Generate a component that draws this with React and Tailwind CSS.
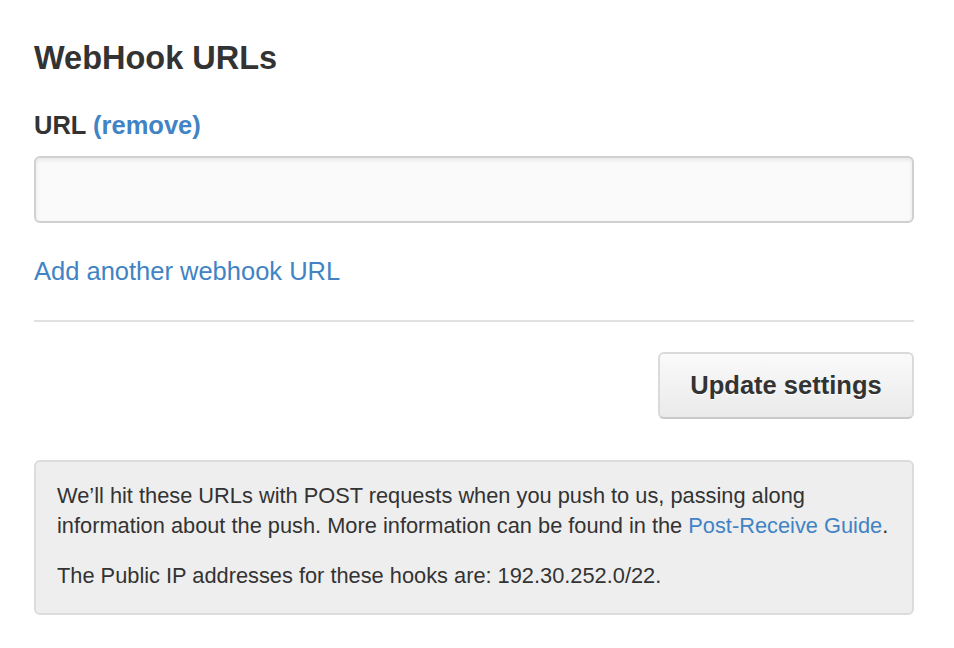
export default function App() {
  return (
    <div className="min-h-screen bg-white text-[#333]" style={{ fontFamily: '"Liberation Sans", Arial, sans-serif' }}>
      <div className="ml-[34px] w-[880px] pt-[38px]">
        <h2 className="text-[32.5px] font-bold leading-[40px]">WebHook URLs</h2>

        <div className="mt-[32px] text-[25.5px] font-bold leading-[30px]">
          URL{" "}
          <a href="#" className="text-[#4183c4]">(remove)</a>
        </div>

        <input
          type="text"
          className="mt-[16px] block h-[67px] w-full rounded-[6px] border-2 border-[#d0d0d0] bg-[#fafafa] shadow-[inset_0_2px_4px_rgba(0,0,0,0.08)] outline-none"
        />

        <a href="#" className="mt-[33px] block text-[25.5px] leading-[30px] text-[#4183c4]">
          Add another webhook URL
        </a>

        <div className="mt-[34px] h-[2px] bg-[#e1e1e1]" />

        <div className="mt-[30px] flex justify-end">
          <button className="h-[67px] w-[256px] rounded-[6px] border-2 border-[#dadada] border-b-[#c9c9c9] bg-gradient-to-b from-[#fafafa] to-[#eaeaea] text-[25.5px] font-bold text-[#333] [text-shadow:0_1px_0_#fff]">
            Update settings
          </button>
        </div>

        <div className="mt-[41px] rounded-[6px] border-2 border-[#dcdcdc] bg-[#eeeeee] pl-[21px] pr-[10px] pt-[19px] pb-[22px] text-[21.8px] leading-[30px]">
          <p>
            We’ll hit these URLs with POST requests when you push to us, passing along information about the push. More information can be found in the{" "}
            <a href="#" className="text-[#4183c4]">Post-Receive Guide</a>.
          </p>
          <p className="mt-[20px]">The Public IP addresses for these hooks are: 192.30.252.0/22.</p>
        </div>
      </div>
    </div>
  );
}
